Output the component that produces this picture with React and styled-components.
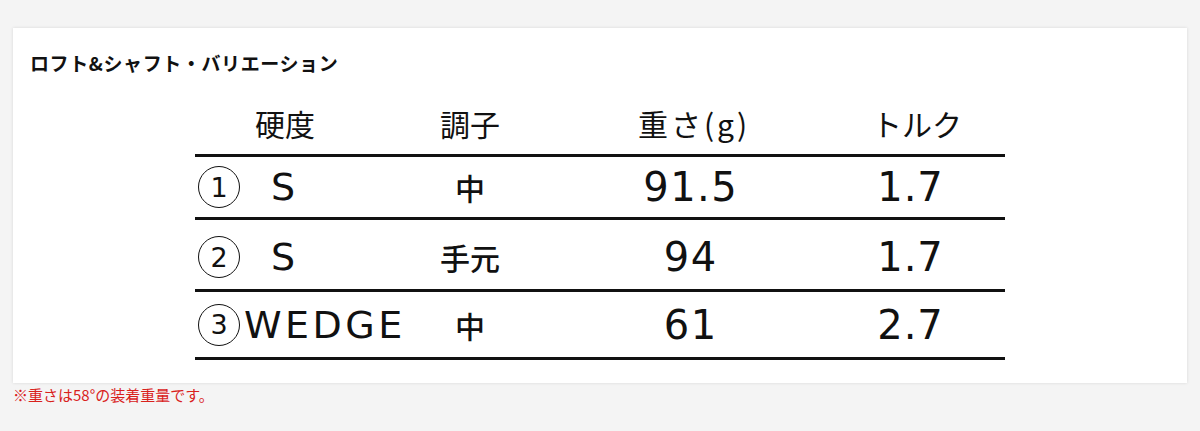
import React from "react";
import styled, { createGlobalStyle } from "styled-components";

const GlobalStyle = createGlobalStyle`
  html, body {
    margin: 0;
    padding: 0;
    background: #f4f4f4;
  }
  body {
    font-family: "Noto Sans CJK JP", "Noto Sans", sans-serif;
    color: #111;
  }
`;

const Page = styled.div`
  padding: 28px 13px 0;
  width: 1174px;
`;

const Card = styled.section`
  background: #fff;
  box-shadow: 0 0 3px rgba(0, 0, 0, 0.12);
  padding: 22px 17px 23px;
  height: 355px;
  box-sizing: border-box;
`;

const Title = styled.h2`
  margin: 0 0 19px;
  font-family: "Noto Sans CJK JP", sans-serif;
  font-size: 19px;
  font-weight: 700;
  line-height: 26px;
  letter-spacing: 0.6px;
  color: #111;
`;

const Table = styled.div`
  width: 810px;
  margin: 0 auto;
`;

const Row = styled.div`
  display: grid;
  grid-template-columns: 180px 190px 250px 190px;
  align-items: center;
  height: ${(p) => p.$h}px;
  border-bottom: 3px solid #111;
  box-sizing: content-box;
  padding-top: ${(p) => p.$pt || 0}px;
  padding-bottom: ${(p) => p.$pb || 0}px;
`;

const HeadCell = styled.div`
  text-align: center;
  font-family: "Noto Sans CJK JP", sans-serif;
  font-size: 30px;
  line-height: 36px;
  letter-spacing: ${(p) => p.$ls || 0}px;
  color: #111;
  padding-left: ${(p) => p.$dx || 0}px;
`;

const FirstCell = styled.div`
  display: flex;
  align-items: center;
  white-space: nowrap;
  padding-left: 3px;
  overflow: visible;
`;

const Circle = styled.span`
  flex: none;
  box-sizing: border-box;
  width: 42px;
  height: 42px;
  border: 1.6px solid #111;
  border-radius: 50%;
  display: flex;
  align-items: center;
  justify-content: center;
  font-family: "DejaVu Sans", sans-serif;
  font-size: 27px;
  line-height: 1;
  color: #111;
`;

const Label = styled.span`
  margin-left: ${(p) => p.$indent}px;
  font-family: "DejaVu Sans", sans-serif;
  font-size: 38px;
  letter-spacing: 3.5px;
  line-height: 44px;
  color: #111;
`;

const Kanji = styled.div`
  text-align: center;
  font-family: "Noto Sans CJK JP", sans-serif;
  font-size: 30px;
  font-weight: 500;
  line-height: 40px;
  color: #111;
`;

const Num = styled.div`
  text-align: center;
  font-family: "DejaVu Sans", sans-serif;
  font-size: 40px;
  letter-spacing: ${(p) => p.$ls}px;
  padding-left: ${(p) => p.$ls}px;
  line-height: 46px;
  color: #111;
`;

const Note = styled.p`
  margin: 2px 0 0;
  font-family: "Noto Sans CJK JP", sans-serif;
  font-size: 15px;
  line-height: 20px;
  color: #d9221c;
`;

const rows = [
  { n: "1", label: "S", indent: 31, kind: "中", weight: "91.5", torque: "1.7", h: 60, pt: 0 },
  { n: "2", label: "S", indent: 31, kind: "手元", weight: "94", torque: "1.7", h: 64, pt: 5 },
  { n: "3", label: "WEDGE", indent: 4, kind: "中", weight: "61", torque: "2.7", h: 65, pt: 0 },
];

export default function App() {
  return (
    <>
      <GlobalStyle />
      <Page>
        <Card>
          <Title>ロフト&amp;シャフト・バリエーション</Title>
          <Table>
            <Row $h={55} $pb={4}>
              <HeadCell>硬度</HeadCell>
              <HeadCell>調子</HeadCell>
              <HeadCell $dx={8} $ls={3}>重さ(g)</HeadCell>
              <HeadCell $dx={14}>トルク</HeadCell>
            </Row>
            {rows.map((r) => (
              <Row key={r.n} $h={r.h} $pt={r.pt}>
                <FirstCell>
                  <Circle>{r.n}</Circle>
                  <Label $indent={r.indent}>{r.label}</Label>
                </FirstCell>
                <Kanji>{r.kind}</Kanji>
                <Num $ls={1.5}>{r.weight}</Num>
                <Num $ls={1}>{r.torque}</Num>
              </Row>
            ))}
          </Table>
        </Card>
        <Note>※重さは58°の装着重量です。</Note>
      </Page>
    </>
  );
}
